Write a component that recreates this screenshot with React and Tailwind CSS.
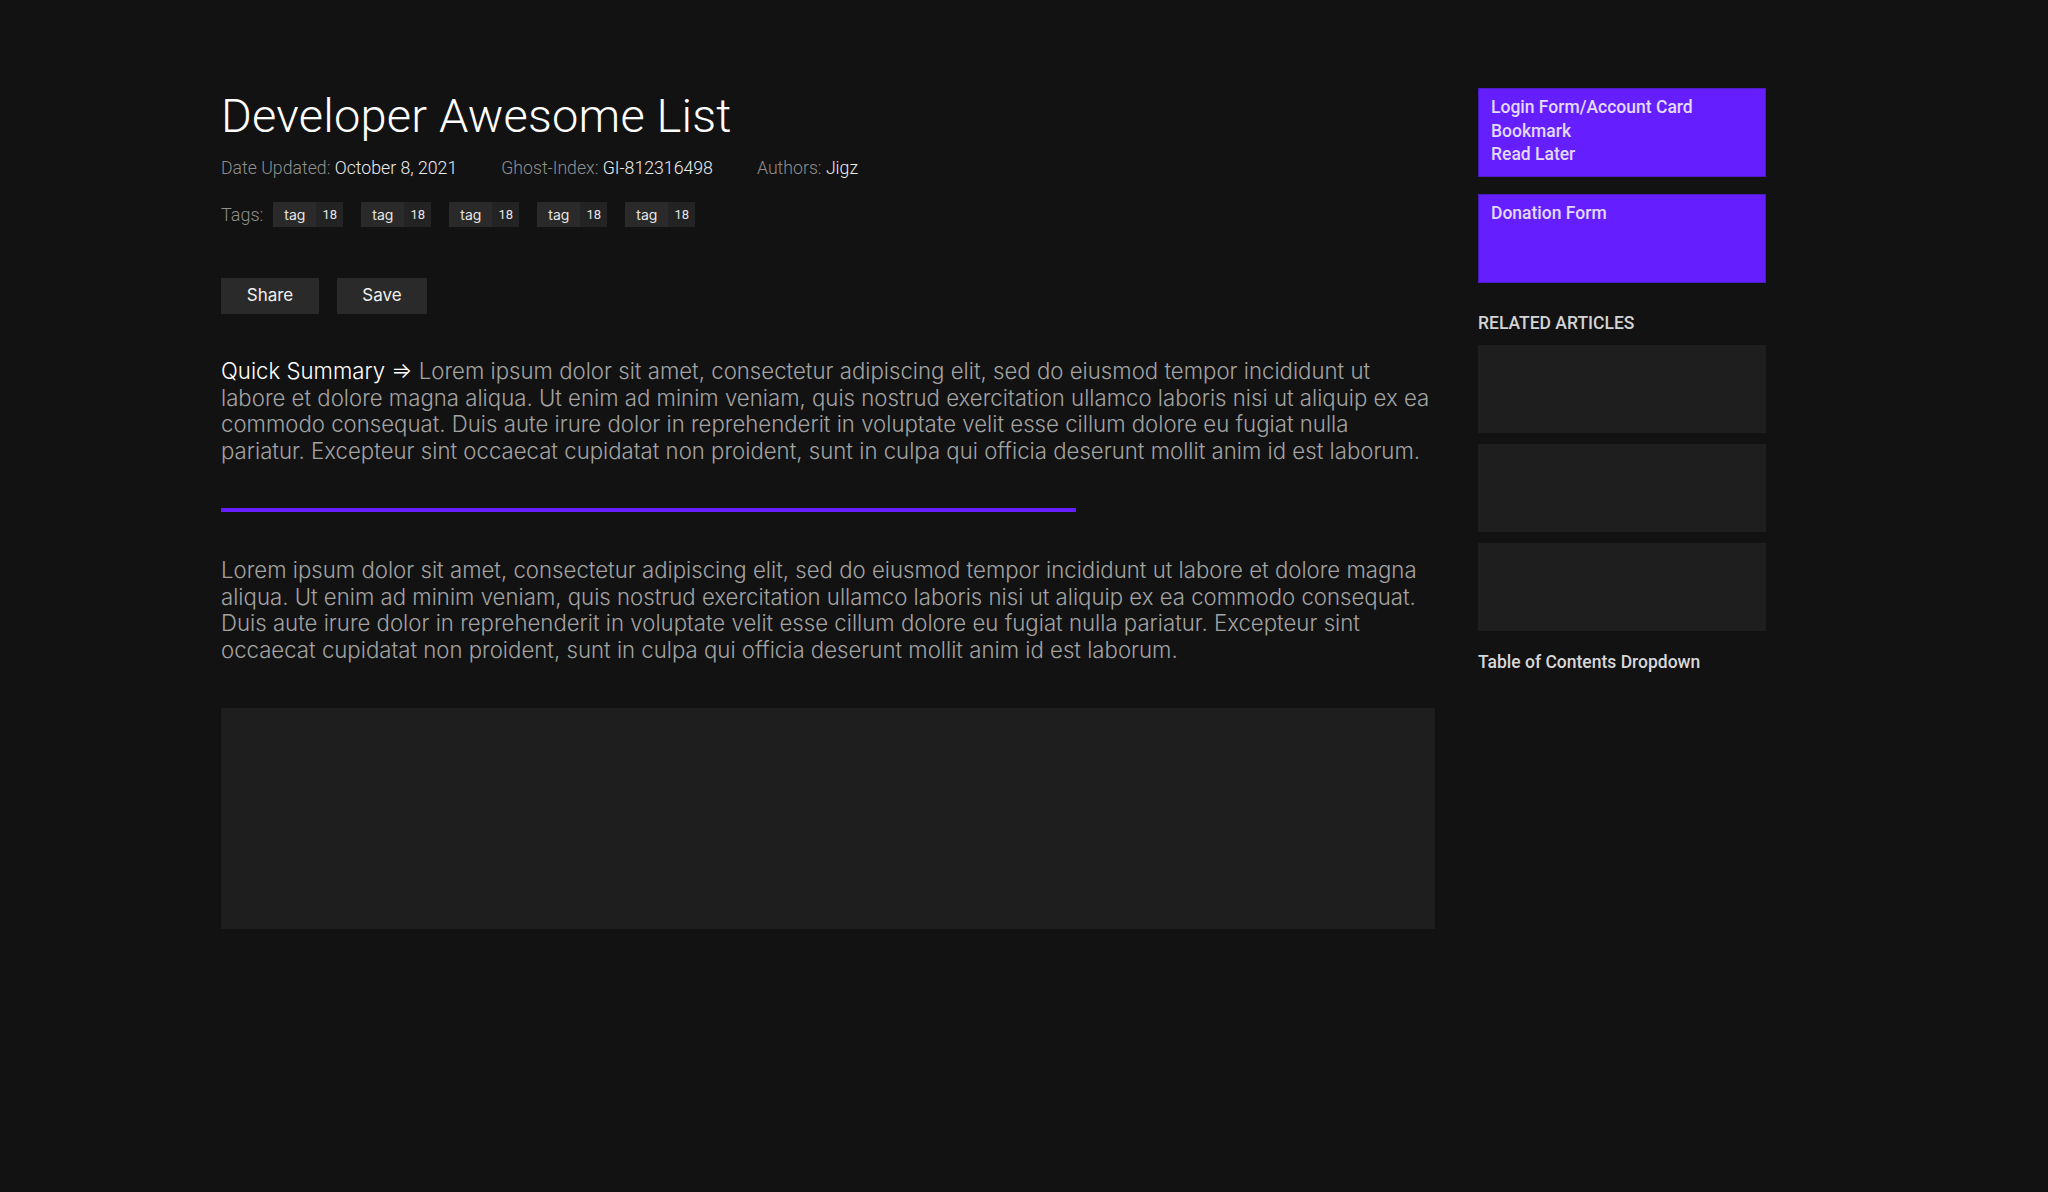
const tags = [1, 2, 3, 4, 5];
const related = [1, 2, 3];

const lorem =
  'Lorem ipsum dolor sit amet, consectetur adipiscing elit, sed do eiusmod tempor incididunt ut labore et dolore magna aliqua. Ut enim ad minim veniam, quis nostrud exercitation ullamco laboris nisi ut aliquip ex ea commodo consequat. Duis aute irure dolor in reprehenderit in voluptate velit esse cillum dolore eu fugiat nulla pariatur. Excepteur sint occaecat cupidatat non proident, sunt in culpa qui officia deserunt mollit anim id est laborum.';

const Meta = ({ label, value }) => (
  <span className="text-[#8f8f8f]">
    {label}: <span className="text-[#ececec]">{value}</span>
  </span>
);

const App = () => {
  return (
    <div className="min-h-screen bg-[#121212] pt-[88px] pl-[221px] pb-20 font-['Inter',sans-serif]">
      <div className="flex gap-[43px] items-start">
        {/* main column */}
        <main className="w-[1214px]">
          <h1 className="font-['Roboto',sans-serif] font-light text-[47px] leading-[56px] text-white tracking-[0.2px]">
            Developer Awesome List
          </h1>

          {/* meta */}
          <div className="mt-[12px] flex gap-[44px] font-['Roboto',sans-serif] font-light text-[17.7px] leading-6">
            <Meta label="Date Updated" value="October 8, 2021" />
            <Meta label="Ghost-Index" value="GI-812316498" />
            <Meta label="Authors" value="Jigz" />
          </div>

          {/* tags */}
          <div className="mt-[21px] flex items-center">
            <span className="font-['Roboto',sans-serif] font-light text-[18px] text-[#8f8f8f] mr-[10px]">
              Tags:
            </span>
            <div className="flex gap-[18px]">
              {tags.map((t) => (
                <div key={t} className="flex h-[25px] text-[14px] text-[#e6e6e6]">
                  <span className="bg-[#2a2a2a] w-[43px] flex items-center justify-center">tag</span>
                  <span className="bg-[#232323] w-[27px] flex items-center justify-center font-['Roboto',sans-serif] text-[13px]">
                    18
                  </span>
                </div>
              ))}
            </div>
          </div>

          {/* actions */}
          <div className="mt-[50px] flex gap-[18px]">
            <button className="h-9 w-[98px] bg-[#2a2a2a] text-[#f0f0f0] text-[17px]">Share</button>
            <button className="h-9 w-[90px] bg-[#2a2a2a] text-[#f0f0f0] text-[17px]">Save</button>
          </div>

          {/* summary */}
          <p className="mt-[44px] text-[22.2px] leading-[26.5px] font-light text-[#a3a3a3]">
            <span className="text-white">Quick Summary ⇒</span> {lorem}
          </p>

          <div className="mt-[44px] h-[4px] w-[855px] bg-[#651fff]" />

          <p className="mt-[45px] text-[22.2px] leading-[26.5px] font-light text-[#a3a3a3]">{lorem}</p>

          <div className="mt-[45px] h-[221px] bg-[#1e1e1e]" />
        </main>

        {/* sidebar */}
        <aside className="w-[288px] font-['Roboto',sans-serif] font-medium text-[17.5px]">
          <div className="h-[89px] bg-[#651fff] border border-[#4d1cc2] px-3 pt-[7px] leading-[23.5px] text-[#e4d9ff]">
            <div>Login Form/Account Card</div>
            <div>Bookmark</div>
            <div>Read Later</div>
          </div>
          <div className="mt-[17px] h-[89px] bg-[#651fff] border border-[#4d1cc2] px-3 pt-[7px] leading-[23.5px] text-[#e4d9ff]">
            Donation Form
          </div>

          <h3 className="mt-[28px] leading-6 text-[#d4d4d4] uppercase">Related Articles</h3>
          <div className="mt-[10px] flex flex-col gap-[11px]">
            {related.map((r) => (
              <div key={r} className="h-[88px] bg-[#1e1e1e]" />
            ))}
          </div>

          <p className="mt-[19px] leading-6 text-[#d8d8d8]">Table of Contents Dropdown</p>
        </aside>
      </div>
    </div>
  );
};

export default App;
